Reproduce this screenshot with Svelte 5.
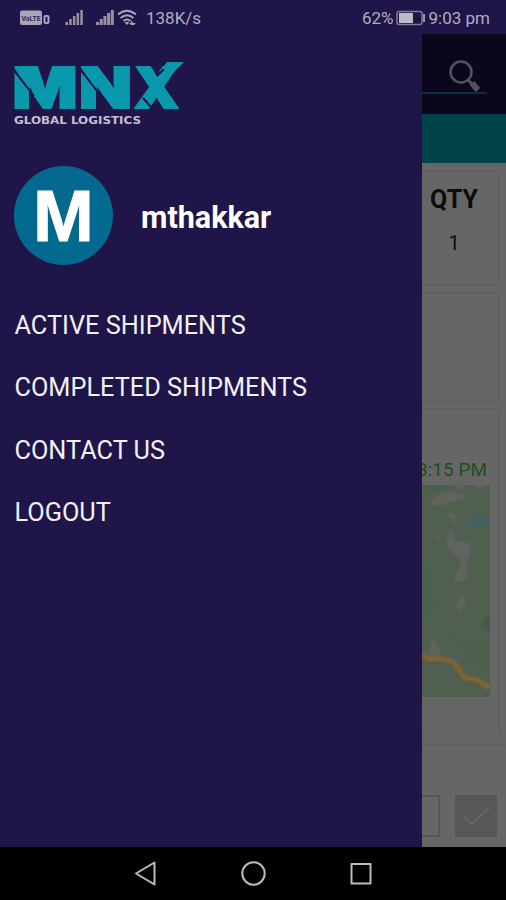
<script>
  const items = ['ACTIVE SHIPMENTS', 'COMPLETED SHIPMENTS', 'CONTACT US', 'LOGOUT'];
  const bars = [0, 1, 2, 3, 4];
</script>

<div class="screen">
  <header class="status">
    <svg class="signals" width="122" height="20" viewBox="0 0 122 20">
      <rect x="2" y="2.5" width="22" height="14.5" rx="2" fill="#aaa4b8" />
      <text x="3.5" y="12.8" font-size="8" font-weight="700" textLength="19" lengthAdjust="spacingAndGlyphs" fill="#30264f">VoLTE</text>
      <rect x="26.5" y="8" width="4" height="7" rx="1" fill="none" stroke="#aaa4b8" stroke-width="2" />
      {#each bars as i}
        <rect x={47.5 + i * 3.7} y={14 - i * 3} width="2.5" height={3 + i * 3} fill="#99919f" />
        <rect x={78 + i * 3.7} y={14 - i * 3} width="3" height={3 + i * 3} fill="#99919f" />
      {/each}
      <g fill="none" stroke="#aaa4b8" stroke-width="1.8">
        <path d="M100 6.5Q109 -1 118 6.5M102.5 10Q109 4.500 115.500 10M105.500 13Q109 10 112.500 13" />
      </g>
      <path d="M106.500 14h5l-2.500 3zM113 12l2 3h3l-2 2h-3l-2-2h2z" fill="#aaa4b8" />
    </svg>
    <span class="speed">138K/s</span>
    <span class="percent">62%</span>
    <svg class="battery" width="30" height="16" viewBox="0 0 30 16">
      <rect x="1" y="1.500" width="25" height="13" rx="2" fill="none" stroke="#827995" stroke-width="1.500" />
      <rect x="3" y="3" width="14" height="10" fill="#bdb9c8" />
      <rect x="27" y="4" width="2" height="8" fill="#9992aa" />
    </svg>
    <span class="clock">9:03 pm</span>
  </header>

  <div class="body">
    <aside>
      <svg class="logo" width="172" height="68" viewBox="0 0 172 68">
        <g fill="#0a98ac" stroke="#0a98ac" stroke-width="2">
          <text class="mark" font-size="57" x="-1.500" y="48" textLength="65" lengthAdjust="spacingAndGlyphs">M</text>
          <text class="mark" font-size="57" x="65" y="48" textLength="53" lengthAdjust="spacingAndGlyphs">N</text>
          <text class="mark" font-size="57" x="120" y="48" textLength="45" lengthAdjust="spacingAndGlyphs">X</text>
        </g>
        <path d="M144 14L153 2H170L158 14Z" fill="#0a98ac" />
        <path d="M-2 8L15 31V52H31L-2 5ZM65 8L82 31V52H98L65 5Z" fill="#1f1548" />
        <path d="M-2 8L20 36M65 8L87 36M129 38L137 47M143 16L150 9" stroke="#1f1548" stroke-width="2" fill="none" />
        <text class="tag" x="0" y="64" textLength="127" lengthAdjust="spacingAndGlyphs">GLOBAL LOGISTICS</text>
      </svg>
      <div class="user">
        <div class="avatar"><span>M</span></div>
        <strong>mthakkar</strong>
      </div>
      <nav>
        {#each items as item}
          <div class="item"><span>{item}</span></div>
        {/each}
      </nav>
    </aside>

    <main>
      <div class="top">
        <svg width="84" height="80" viewBox="0 0 84 80">
          <path d="M0 59H65" stroke="#123a59" stroke-width="1.500" />
          <circle cx="39" cy="38" r="10.500" fill="none" stroke="#555259" stroke-width="2.500" />
          <path d="M46 46L50 50" stroke="#555259" stroke-width="3" />
          <path d="M50 49L56 56" stroke="#555259" stroke-width="6" />
        </svg>
      </div>
      <div class="band"></div>
      <section class="card qty"><b>QTY</b><span>1</span></section>
      <section class="card blank"></section>
      <section class="card route">
        <div class="time"><span>3:15 PM</span></div>
        <svg class="map" width="68" height="212" viewBox="0 0 68 212">
          <defs><filter id="soft"><feGaussianBlur stdDeviation="1" /></filter></defs>
          <rect width="68" height="212" fill="#505f50" />
          <g filter="url(#soft)">
            <path d="M0 0H28L18 5L0 9Z" fill="#4c604c" />
            <path d="M7 19L16 10L29 6L43 9L42 14L28 17L18 21ZM29 0L43 0L39 5ZM51 0H60V6Z" fill="#62645f" />
            <path d="M25 27L34 30L32 40ZM15 46L18 53L15 57ZM27 44L31 48L32 57L39 56L49 60L48 69L44 78L44 95L33 98L32 92L38 83L39 73L29 67L24 60ZM40 109L44 118L36 128L35 119ZM10 154L16 160L20 173L6 171Z" fill="#616460" />
            <path d="M45 38L53 33L68 33V39L47 41Z" fill="#435f6c" />
            <path d="M29 171H38V175H29Z" fill="#4a6065" />
            <path d="M60 137L68 130V146L61 144Z" fill="#495749" />
            <path d="M0 84L15 71L10 105L24 122L0 140ZM20 151L45 146L68 155V185L45 181Z" fill="#4e614f" />
            <path d="M0 170L7 174C27 173 32 176 37 184C39 189 41 193 48 194C58 193 60 200 68 203" fill="none" stroke="#765f31" stroke-width="6" />
            <path d="M0 170L7 174C27 173 32 176 37 184C39 189 41 193 48 194C58 193 60 200 68 203" fill="none" stroke="#806837" stroke-width="3" />
          </g>
        </svg>
      </section>
      <section class="card actions">
        <div class="field"></div>
        <div class="check">
          <svg width="42" height="42" viewBox="0 0 42 42"><path d="M9 22L17 29L35 12" fill="none" stroke="#656565" stroke-width="2" /></svg>
        </div>
      </section>
    </main>
  </div>

  <footer>
    <svg width="506" height="53" viewBox="0 0 506 53" fill="none" stroke="#bcbcbc" stroke-width="2" stroke-linejoin="round">
      <path d="M154.500 15.500V37.500L136 26.500Z" />
      <circle cx="253.500" cy="26.500" r="11.200" />
      <rect x="351.500" y="17" width="19" height="19.500" />
    </svg>
  </footer>
</div>

<style>
  :global(body) { margin: 0; background: #000; }
  .screen { width: 506px; height: 900px; display: flex; flex-direction: column; overflow: hidden; background: #1f1548; font-family: Roboto, "Liberation Sans", sans-serif; }
  svg { display: block; flex-shrink: 0; }
  .status { height: 34px; box-sizing: border-box; padding: 1px 16px 0 18px; display: flex; align-items: center; flex-shrink: 0; color: #b3adc0; font-size: 17px; white-space: nowrap; }
  .speed { margin-left: 6px; }
  .percent { margin-left: auto; font-size: 17px; }
  .battery { margin: 0 3px 0 2px; }
  .body { display: flex; height: 813px; flex-shrink: 0; }
  aside { width: 422px; flex-shrink: 0; background: #1f1548; }
  .logo { margin: 26px 0 0 14px; overflow: visible; }
  .mark { font-family: Inter, "Liberation Sans", sans-serif; font-weight: 900; }
  .tag { font-family: "DejaVu Sans", sans-serif; font-size: 10.500px; font-weight: 700; fill: #c4bfd2; }
  .user { display: flex; align-items: center; margin: 38px 0 0 14px; height: 99px; }
  .avatar { width: 99px; height: 99px; border-radius: 50%; background: #03698f; color: #fff; display: flex; align-items: center; justify-content: center; font: bold 73px/1 "Liberation Sans", sans-serif; -webkit-text-stroke: 1px #fff; }
  .user strong { margin: 4px 0 0 28px; color: #fff; font-size: 30.500px; line-height: 34px; letter-spacing: 0; }
  nav { margin: 29.500px 0 0 14.500px; }
  .item { height: 62.300px; display: flex; align-items: center; color: #f3f1f6; font-size: 25.300px; white-space: nowrap; }
  main { width: 84px; overflow: hidden; background: #666; display: flex; flex-direction: column; }
  .top { height: 80px; flex-shrink: 0; background: #0a061b; }
  .band { height: 49px; flex-shrink: 0; background: #004249; }
  .card { box-sizing: border-box; width: 78px; flex-shrink: 0; border: 2px solid #616161; border-left: 0; border-radius: 0 3px 3px 0; }
  .qty { margin-top: 7px; height: 116px; display: flex; flex-direction: column; align-items: center; padding: 13px 12px 0 0; color: #0c0c0c; }
  .qty b { font-size: 25px; line-height: 30px; font-weight: 700; }
  .qty span { font-size: 20px; line-height: 28px; margin-top: 14px; }
  .blank { margin-top: 6px; height: 111px; }
  .route { margin-top: 5px; height: 329px; padding-top: 47px; }
  .time { display: flex; justify-content: flex-end; width: 65px; height: 28px; line-height: 26px; font-size: 19px; color: #1e4e22; white-space: nowrap; }
  .actions { margin-top: 7px; width: 84px; height: 103px; border-right: 0; border-bottom: 0; display: flex; padding-top: 49px; }
  .field { box-sizing: border-box; width: 18px; height: 42px; border: 2px solid #565656; border-left: 0; }
  .check { width: 42px; height: 42px; margin-left: 15px; background: #575757; }
  footer { height: 53px; background: #000; flex-shrink: 0; }
</style>
